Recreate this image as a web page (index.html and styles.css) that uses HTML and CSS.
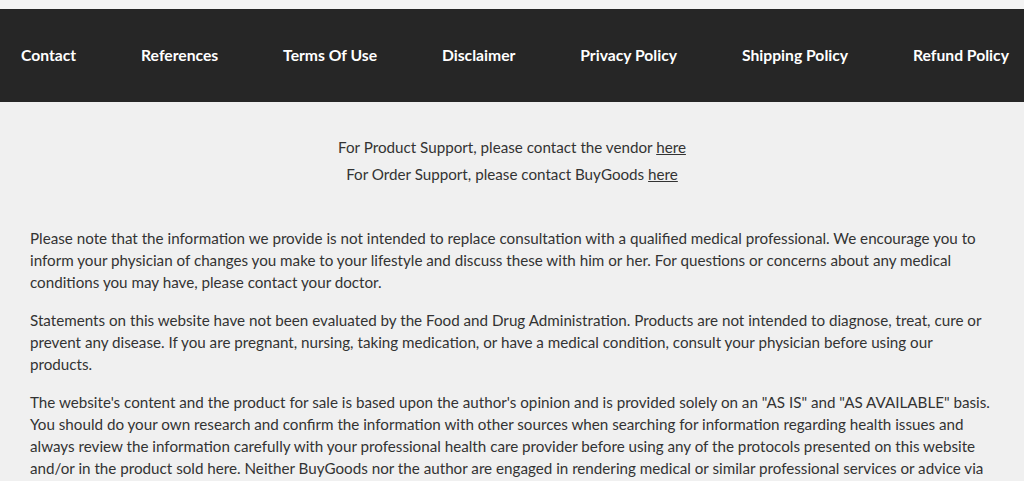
FILE: index.html
```html
<!DOCTYPE html>
<html lang="en">
<head>
<meta charset="utf-8">
<title>Footer</title>
<link rel="stylesheet" href="styles.css">
</head>
<body>
<div class="page">
  <nav class="footer-nav">
    <a href="#">Contact</a>
    <a href="#">References</a>
    <a href="#">Terms Of Use</a>
    <a href="#">Disclaimer</a>
    <a href="#">Privacy Policy</a>
    <a href="#">Shipping Policy</a>
    <a href="#">Refund Policy</a>
  </nav>
  <section class="support">
    <p>For Product Support, please contact the vendor <a href="#">here</a></p>
    <p>For Order Support, please contact BuyGoods <a href="#">here</a></p>
  </section>
  <section class="disclaimer">
    <p>Please note that the information we provide is not intended to replace consultation with a qualified medical professional. We encourage you to inform your physician of changes you make to your lifestyle and discuss these with him or her. For questions or concerns about any medical conditions you may have, please contact your doctor.</p>
    <p>Statements on this website have not been evaluated by the Food and Drug Administration. Products are not intended to diagnose, treat, cure or prevent any disease. If you are pregnant, nursing, taking medication, or have a medical condition, consult your physician before using our products.</p>
    <p>The website's content and the product for sale is based upon the author's opinion and is provided solely on an "AS IS" and "AS AVAILABLE" basis. You should do your own research and confirm the information with other sources when searching for information regarding health issues and always review the information carefully with your professional health care provider before using any of the protocols presented on this website and/or in the product sold here. Neither BuyGoods nor the author are engaged in rendering medical or similar professional services or advice via this website or in the product, and the information provided is not intended to replace medical advice offered by a physician or other licensed healthcare provider.</p>
  </section>
</div>
</body>
</html>
```

FILE: styles.css
```css
html, body {
  margin: 0;
  padding: 0;
}
body {
  background: #f4f4f4;
  font-family: Lato, "Liberation Sans", sans-serif;
  color: #333333;
}
.page {
  padding-top: 9px;
}
.footer-nav {
  background: #262626;
  height: 93px;
  display: flex;
  align-items: center;
  justify-content: space-between;
  padding: 0 15px 2px 21px;
  box-sizing: border-box;
}
.footer-nav a {
  color: #ffffff;
  text-decoration: none;
  font-weight: 700;
  font-size: 15.7px;
}
.support {
  background: #f0f0f0;
  padding: 32px 0 39px;
  text-align: center;
  font-size: 15.2px;
  line-height: 27px;
}
.support p {
  margin: 0;
}
.support a {
  color: #333333;
  text-decoration: underline;
}
.disclaimer {
  background: #f0f0f0;
  padding: 0 30px 20px;
  font-size: 15.2px;
  line-height: 22px;
}
.disclaimer p {
  margin: 0 0 16px;
}
```
